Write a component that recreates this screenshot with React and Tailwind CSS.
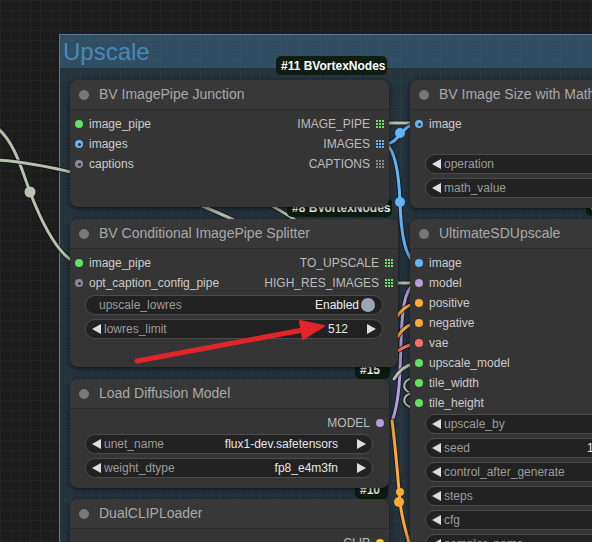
import React from "react";

function Dot({ cls, ring }) {
  return (
    <span className={"w-2 h-2 rounded-full shrink-0 flex items-center justify-center " + cls}>
      {ring ? <span className="w-[3px] h-[3px] rounded-full bg-[#2f2f2f]" /> : null}
    </span>
  );
}

function GridIcon({ fill }) {
  const cells = [];
  for (const y of [0, 3, 6]) for (const x of [0, 3, 6]) cells.push(<rect key={x + "-" + y} x={x} y={y} width="2" height="2" fill={fill} />);
  return (
    <svg width="8" height="8" viewBox="0 0 8 8" className="shrink-0">
      {cells}
    </svg>
  );
}

function LTri() {
  return (
    <svg width="9" height="10" viewBox="0 0 9 10" className="shrink-0">
      <path d="M0 5 L9 0 L9 10 Z" fill="#dedede" />
    </svg>
  );
}
function RTri() {
  return (
    <svg width="9" height="10" viewBox="0 0 9 10" className="shrink-0">
      <path d="M9 5 L0 0 L0 10 Z" fill="#dedede" />
    </svg>
  );
}

function Title({ children }) {
  return (
    <div className="h-[30px] shrink-0 flex items-center pl-[9px] gap-[10px] bg-[#383838] border-b border-[#2c2c2c] text-[14px] text-[#a9a9a9] whitespace-nowrap">
      <span className="w-[10px] h-[10px] rounded-full bg-[#787878] shrink-0" />
      {children}
    </div>
  );
}

function In({ dot, label }) {
  return (
    <div className="flex items-center gap-[6px] text-[#cccccc] whitespace-nowrap">
      {dot}
      {label}
    </div>
  );
}

function Out({ icon, label }) {
  return (
    <div className="flex items-center gap-[6px] text-[#bdbdbd] whitespace-nowrap">
      {label}
      {icon}
    </div>
  );
}

function Row({ left, right }) {
  return (
    <div className="h-5 flex items-center justify-between pl-[5px] pr-[5px] text-[12px]">
      {left || <span />}
      {right || <span />}
    </div>
  );
}

const widgetBase =
  "h-5 rounded-full bg-[#222222] border border-[#4c4c4c] flex items-center text-[12px] whitespace-nowrap";

function NumW({ label, value, mx = "mx-[15px]" }) {
  return (
    <div className={widgetBase + " pl-[6px] pr-[6px] " + mx}>
      <LTri />
      <span className="ml-[3px] flex-1 text-[#9c9c9c]">{label}</span>
      <span className="text-[#e6e6e6]">{value}</span>
      <span className="ml-[19px]">
        <RTri />
      </span>
    </div>
  );
}

function ToggleW({ label, value }) {
  return (
    <div className={widgetBase + " mx-[15px] pl-[13px] pr-[7px]"}>
      <span className="flex-1 text-[#9c9c9c]">{label}</span>
      <span className="text-[#eeeeee] mr-[2px]">{value}</span>
      <span className="w-[14px] h-[14px] rounded-full bg-[#9ba5b5]" />
    </div>
  );
}

function OpenW({ label, value }) {
  return (
    <div className={widgetBase + " mx-[15px] pl-[6px] pr-[6px]"}>
      <LTri />
      {value ? (
        <>
          <span className="ml-[3px] w-[143px] shrink-0 text-[#9c9c9c]">{label}</span>
          <span className="text-[#e6e6e6]">{value}</span>
        </>
      ) : (
        <span className="ml-[3px] text-[#9c9c9c]">{label}</span>
      )}
    </div>
  );
}

function Badge({ cls, children }) {
  return (
    <div
      className={
        "absolute h-[19px] rounded-[5px] bg-[#0f1d11] text-white font-bold text-[12px] flex items-center pl-[5px] whitespace-nowrap overflow-hidden " +
        cls
      }
    >
      {children}
    </div>
  );
}

function Wire({ d, color, w = 3 }) {
  return (
    <>
      <path d={d} fill="none" stroke="#111111" strokeWidth={w + 2} strokeLinecap="round" opacity="0.7" />
      <path d={d} fill="none" stroke={color} strokeWidth={w} strokeLinecap="round" />
    </>
  );
}

export default function App() {
  const grey = "#b6c0ae";
  return (
    <div className="relative w-[592px] h-[542px] overflow-hidden bg-[#1c1c1c] bg-[linear-gradient(to_right,#232323_1px,transparent_1px),linear-gradient(to_bottom,#232323_1px,transparent_1px)] bg-[size:10px_10px] font-['Liberation_Sans',Arial,sans-serif]">
      {/* Group */}
      <div className="absolute left-[59px] top-[34px] w-[600px] h-[560px] border border-[#55799a] bg-[#3f789e]/25 flex flex-col">
        <div className="h-[33px] bg-[#3f789e]/40 pl-[3px] flex items-center text-[24px] text-[#4c87b5] leading-none">
          Upscale
        </div>
      </div>

      {/* Wires */}
      <svg className="absolute left-0 top-0" width="592" height="542" viewBox="0 0 592 542">
        <Wire d="M -5 126 C 15 141, 22 171, 30 192 S 55 253, 76 263" color={grey} />
        <circle cx="30" cy="192" r="5.5" fill="#b9c3b1" />
        <Wire d="M -5 160 C 20 161, 50 167, 75 173" color={grey} />
        <Wire d="M 190 201 C 205 207, 220 213, 240 223" color={grey} />
        <Wire d="M 262 201 C 275 207, 285 213, 300 223" color={grey} />
        <Wire d="M 385 123 L 414 123" color={grey} />
        <Wire d="M 386 144 C 398 144, 403 124, 416 124" color="#64b5f6" />
        <circle cx="400" cy="133" r="5" fill="#64b5f6" />
        <Wire d="M 386 144 C 396 151, 399 176, 400 202 C 401 231, 404 253, 414 263" color="#64b5f6" />
        <circle cx="400" cy="202" r="5" fill="#64b5f6" />
        <Wire d="M 392 283 L 414 283" color={grey} />
        <Wire d="M 414 284 C 404 291, 402 311, 401 341 S 400 401, 392 421" color="#b39ddb" />
        <Wire d="M 394 321 C 400 311, 406 305, 414 304" color="#ffa931" />
        <Wire d="M 394 343 C 400 331, 406 325, 414 324" color="#ffa931" />
        <Wire d="M 394 353 C 402 348, 408 345, 414 344" color="#ff6e6e" />
        <Wire d="M 394 379 C 400 369, 406 365, 414 364" color={grey} />
        <Wire d="M 412 378 C 402 381, 402 389, 410 393" color={grey} w={2} />
        <Wire d="M 412 393 C 402 396, 402 403, 410 407" color={grey} w={2} />
        <Wire d="M 392 421 C 396 451, 398 481, 400 501 S 406 531, 410 546" color="#ffa931" />
        <circle cx="400" cy="492" r="4" fill="#ffa931" />
        <circle cx="399" cy="502" r="5" fill="#ffa931" />
      </svg>

      {/* Badges behind nodes */}
      <Badge cls="left-[287px] top-[198px] w-[105px]">#8 BVortexNodes</Badge>
      <Badge cls="left-[355px] top-[360px] w-[35px]">#15</Badge>
      <Badge cls="left-[355px] top-[480px] w-[33px]">#10</Badge>
      <Badge cls="left-[586px] top-[197px] w-[40px]">#9</Badge>

      {/* Node 1: BV ImagePipe Junction */}
      <div className="absolute left-[70px] top-[80px] w-[319px] h-[127px] rounded-lg bg-[#353535] shadow-[0_2px_6px_rgba(0,0,0,0.55)] overflow-hidden flex flex-col">
        <Title>BV ImagePipe Junction</Title>
        <div className="pt-[4px] flex flex-col">
          <Row
            left={<In dot={<Dot cls="bg-[#62e062]" />} label="image_pipe" />}
            right={<Out label="IMAGE_PIPE" icon={<GridIcon fill="#6fe06f" />} />}
          />
          <Row
            left={<In dot={<Dot cls="bg-[#64b5f6]" ring />} label="images" />}
            right={<Out label="IMAGES" icon={<GridIcon fill="#64b5f6" />} />}
          />
          <Row
            left={<In dot={<Dot cls="bg-[#8a8797]" ring />} label="captions" />}
            right={<Out label="CAPTIONS" icon={<GridIcon fill="#8a8a8a" />} />}
          />
        </div>
      </div>

      {/* Node 2: BV Conditional ImagePipe Splitter */}
      <div className="absolute left-[70px] top-[219px] w-[328px] h-[148px] rounded-lg bg-[#353535] shadow-[0_2px_6px_rgba(0,0,0,0.55)] overflow-hidden flex flex-col">
        <Title>BV Conditional ImagePipe Splitter</Title>
        <div className="pt-[4px] flex flex-col">
          <Row
            left={<In dot={<Dot cls="bg-[#62e062]" />} label="image_pipe" />}
            right={<Out label="TO_UPSCALE" icon={<GridIcon fill="#6fe06f" />} />}
          />
          <Row
            left={<In dot={<Dot cls="bg-[#8a8797]" ring />} label="opt_caption_config_pipe" />}
            right={<Out label="HIGH_RES_IMAGES" icon={<GridIcon fill="#6fe06f" />} />}
          />
          <div className="mt-[2px] flex flex-col gap-[4px]">
            <ToggleW label="upscale_lowres" value="Enabled" />
            <NumW label="lowres_limit" value="512" />
          </div>
        </div>
      </div>

      {/* Node 3: Load Diffusion Model */}
      <div className="absolute left-[70px] top-[379px] w-[319px] h-[109px] rounded-lg bg-[#353535] shadow-[0_2px_6px_rgba(0,0,0,0.55)] overflow-hidden flex flex-col">
        <Title>Load Diffusion Model</Title>
        <div className="pt-[4px] flex flex-col">
          <Row right={<Out label="MODEL" icon={<Dot cls="bg-[#b39ddb]" />} />} />
          <div className="mt-[1px] flex flex-col gap-[4px]">
            <NumW label="unet_name" value="flux1-dev.safetensors" mx="ml-[15px] mr-[16px]" />
            <NumW label="weight_dtype" value="fp8_e4m3fn" mx="ml-[15px] mr-[16px]" />
          </div>
        </div>
      </div>

      {/* Node 4: DualCLIPLoader */}
      <div className="absolute left-[70px] top-[499px] w-[319px] h-[120px] rounded-lg bg-[#353535] shadow-[0_2px_6px_rgba(0,0,0,0.55)] overflow-hidden flex flex-col">
        <Title>DualCLIPLoader</Title>
        <div className="pt-[4px] flex flex-col">
          <Row right={<Out label="CLIP" icon={<Dot cls="bg-[#ffd500]" />} />} />
        </div>
      </div>

      {/* Right node 1: BV Image Size with Math */}
      <div className="absolute left-[410px] top-[80px] w-[260px] h-[128px] rounded-lg bg-[#353535] shadow-[0_2px_6px_rgba(0,0,0,0.55)] overflow-hidden flex flex-col">
        <Title>BV Image Size with Math</Title>
        <div className="pt-[4px] flex flex-col">
          <Row left={<In dot={<Dot cls="bg-[#64b5f6]" ring />} label="image" />} />
          <div className="mt-[20px] flex flex-col gap-[4px]">
            <OpenW label="operation" />
            <OpenW label="math_value" />
          </div>
        </div>
      </div>

      {/* Right node 2: UltimateSDUpscale */}
      <div className="absolute left-[410px] top-[219px] w-[300px] h-[400px] rounded-lg bg-[#353535] shadow-[0_2px_6px_rgba(0,0,0,0.55)] overflow-hidden flex flex-col">
        <Title>UltimateSDUpscale</Title>
        <div className="pt-[4px] flex flex-col">
          <Row left={<In dot={<Dot cls="bg-[#64b5f6]" />} label="image" />} />
          <Row left={<In dot={<Dot cls="bg-[#b39ddb]" />} label="model" />} />
          <Row left={<In dot={<Dot cls="bg-[#ffa931]" />} label="positive" />} />
          <Row left={<In dot={<Dot cls="bg-[#ffa931]" />} label="negative" />} />
          <Row left={<In dot={<Dot cls="bg-[#ff6e6e]" />} label="vae" />} />
          <Row left={<In dot={<Dot cls="bg-[#62e062]" />} label="upscale_model" />} />
          <Row left={<In dot={<Dot cls="bg-[#62e062]" />} label="tile_width" />} />
          <Row left={<In dot={<Dot cls="bg-[#62e062]" />} label="tile_height" />} />
          <div className="mt-[1px] flex flex-col gap-[4px]">
            <OpenW label="upscale_by" />
            <OpenW label="seed" value="1" />
            <OpenW label="control_after_generate" />
            <OpenW label="steps" />
            <OpenW label="cfg" />
            <OpenW label="sampler_name" />
          </div>
        </div>
      </div>

      {/* Top badge */}
      <Badge cls="left-[276px] top-[56px] w-[111px]">#11 BVortexNodes</Badge>

      {/* Red annotation arrow */}
      <svg className="absolute left-0 top-0 pointer-events-none" width="592" height="542" viewBox="0 0 592 542">
        <line x1="137" y1="361" x2="303" y2="330" stroke="#e3242b" strokeWidth="5" strokeLinecap="round" />
        <path d="M 324 326 L 300 321 L 303 339 Z" fill="#e3242b" stroke="#e3242b" strokeWidth="2" strokeLinejoin="round" />
      </svg>
    </div>
  );
}
